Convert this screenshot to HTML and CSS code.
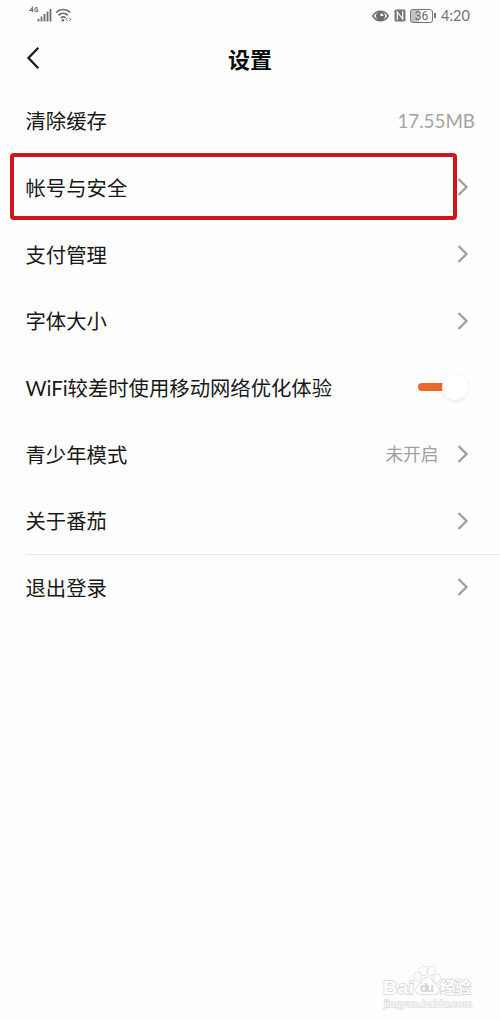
FILE: index.html
```html
<!DOCTYPE html>
<html lang="zh-CN">
<head>
<meta charset="utf-8">
<title>设置</title>
<link rel="stylesheet" href="styles.css">
</head>
<body>
<div class="screen">
  <div class="status">
    <svg class="signal" width="44" height="18" viewBox="0 0 44 18" fill="none" stroke="#6e6e6e">
      <path d="M3.400 7V2.500L1 5.500h3.400M8.600 3.400C7.800 2 5.800 2.600 5.800 4.600s2 2.800 2.900 1.600V4.800H7.300" stroke-width="1.100"/>
      <path d="M9.500 14v2.500M12.500 11.500v5M15.500 9v7.500M18.500 6.500v10M21.500 4v12.500" stroke-width="1.800"/>
      <path d="M27 7.500c4.200-4 10.200-4 14.400 0M29.500 10.300c2.800-2.600 6.600-2.600 9.400 0M31.800 12.900c1.500-1.300 3.300-1.300 4.800 0" stroke-width="1.700"/>
      <circle cx="33.900" cy="15.200" r="1.300" fill="#6e6e6e" stroke="none"/>
      <path d="m38.500 12.800-1.500 1.500 1.500 1.500M40.200 12.800l1.500 1.500-1.500 1.500" stroke-width="1"/>
    </svg>
    <div class="status-right">
      <svg width="17" height="14" viewBox="0 0 17 14">
        <path d="M.8 7C4.500.8 12.500.8 16.200 7 12.500 13.200 4.500 13.200.8 7Z" fill="#fff" stroke="#6e6e6e" stroke-width="1.500"/>
        <circle cx="8.500" cy="7" r="4.600" fill="#6e6e6e"/>
        <path d="M8.500 4.200v2.900h2.900a2.900 2.900 0 0 0-2.900-2.900Z" fill="#fff"/>
      </svg>
      <svg class="nfc" width="12" height="13" viewBox="0 0 12 13">
        <rect x=".5" y=".5" width="11" height="12" rx="1.500" fill="#747474"/>
        <path d="M3.300 11V3l5.400 7V2" fill="none" stroke="#fff" stroke-width="1.200"/>
      </svg>
      <div class="battery"><span>36</span></div>
      <i class="battery-tip"></i>
      <time>4:20</time>
    </div>
  </div>
  <header>
    <svg class="back" width="15" height="24" viewBox="0 0 15 24"><path d="M12.300 1.800 2.500 12l9.800 10.200" fill="none" stroke="#1a1a1a" stroke-width="2.300"/></svg>
    <h1>设置</h1>
  </header>
  <main>
    <div class="row"><span>清除缓存</span><span class="size">17.55MB</span></div>
    <div class="row marked"><span>帐号与安全</span><svg class="arrow" viewBox="0 0 12 18"><path d="m1.500 1 8 8-8 8"/></svg></div>
    <div class="row"><span>支付管理</span><svg class="arrow" viewBox="0 0 12 18"><path d="m1.500 1 8 8-8 8"/></svg></div>
    <div class="row"><span>字体大小</span><svg class="arrow" viewBox="0 0 12 18"><path d="m1.500 1 8 8-8 8"/></svg></div>
    <div class="row"><span>WiFi较差时使用移动网络优化体验</span><div class="switch"><i class="knob"></i></div></div>
    <div class="row"><span>青少年模式</span><span class="value">未开启</span><svg class="arrow" viewBox="0 0 12 18"><path d="m1.500 1 8 8-8 8"/></svg></div>
    <div class="row"><span>关于番茄</span><svg class="arrow" viewBox="0 0 12 18"><path d="m1.500 1 8 8-8 8"/></svg></div>
    <div class="row divided"><span>退出登录</span><svg class="arrow" viewBox="0 0 12 18"><path d="m1.500 1 8 8-8 8"/></svg></div>
  </main>
  <svg class="watermark" width="100" height="50" viewBox="0 0 100 50" fill="#fff" stroke="#d6d6d6" stroke-width="1.500">
    <text x="2" y="31.500" font-size="19" font-weight="700" textLength="31" lengthAdjust="spacingAndGlyphs">Bai</text>
    <ellipse cx="36.700" cy="14.500" rx="3.400" ry="4.300" transform="rotate(-18 36.700 14.500)"/>
    <ellipse cx="42.500" cy="8.700" rx="3.300" ry="4.500"/>
    <ellipse cx="50.500" cy="9" rx="3.300" ry="4.500" transform="rotate(10 50.500 9)"/>
    <ellipse cx="56" cy="16.500" rx="3.300" ry="4.300" transform="rotate(18 56 16.500)"/>
    <path d="M46.500 15.500c4 0 4.500 4 8.500 7 5 4.500 3 9.500-2 9.500H40c-5.500 0-6.500-5-2.500-8.500 4-3 5-8 9-8Z"/>
    <text class="du" x="39" y="30" font-size="12.500" font-weight="700" textLength="14">du</text>
    <text x="59" y="30.500" font-size="15.500" font-weight="700" textLength="31">经验</text>
    <text class="url" x="3" y="44.500" font-size="9" textLength="88" lengthAdjust="spacingAndGlyphs">jingyan.baidu.com</text>
  </svg>
</div>
</body>
</html>
```
FILE: styles.css
```css
*, *::before, *::after { box-sizing: border-box; }
body {
  margin: 0;
  background: #fefefe;
  color: #181818;
  font-family: Lato, "Noto Sans CJK SC", sans-serif;
}
.screen {
  position: relative;
  width: 500px;
  height: 1020px;
  overflow: hidden;
}
.status {
  display: flex;
  justify-content: space-between;
  align-items: center;
  height: 31px;
  padding: 0 30px 0 29px;
}
.signal { margin-top: -3px; }
.status-right { display: flex; align-items: center; }
.nfc { margin-left: 5px; }
.battery {
  display: flex;
  align-items: center;
  justify-content: center;
  width: 23px;
  height: 14px;
  margin-left: 4px;
  border: 1px solid #777;
  border-radius: 3px;
  background: linear-gradient(90deg, #c4c4c4 36%, #fefefe 36%);
  color: #666;
  font: 12px/12px Roboto, sans-serif;
}
.battery-tip {
  width: 2px;
  height: 5px;
  margin-left: 1px;
  background: #777;
}
time {
  width: 29px;
  margin-left: 5px;
  color: #727272;
  font-size: 14.5px;
  line-height: 18px;
  white-space: nowrap;
}
header {
  display: grid;
  grid-template-columns: 75px 1fr 75px;
  align-items: center;
  height: 57px;
}
.back { margin: -3px 0 0 26px; }
h1 {
  margin: 1px 0 0;
  color: #0c0c0c;
  font-size: 22px;
  line-height: 32px;
  font-weight: 700;
  text-align: center;
}
.row {
  position: relative;
  display: flex;
  align-items: center;
  height: 66.67px;
  padding: 0 31px 0 25.5px;
  font-size: 20.35px;
  line-height: 30px;
}
.row > span:first-child { flex: 1; }
.row .size {
  margin-right: -6px;
  color: #a3a3a3;
  font-size: 18.8px;
}
.value {
  margin: 1px 18.5px 0 0;
  color: #a0a0a0;
  font-size: 17.7px;
}
.arrow {
  width: 12px;
  height: 18px;
  margin-top: -1px;
  fill: none;
  stroke: #a0a0a0;
  stroke-width: 2.4px;
}
.marked::after {
  content: "";
  position: absolute;
  left: 10px;
  top: -1.5px;
  width: 446.5px;
  height: 67px;
  border: 4px solid #d0161b;
  border-radius: 4px;
}
.divided::before {
  content: "";
  position: absolute;
  left: 26px;
  right: 0;
  top: -1px;
  height: 1px;
  background: #e6e6e6;
}
.switch {
  display: flex;
  align-items: center;
  justify-content: flex-end;
  width: 50px;
  height: 8px;
  margin: -1px 1px 0 0;
  border-radius: 4px;
  background: linear-gradient(90deg, #ea682c 60%, transparent 60%);
}
.knob {
  width: 26px;
  height: 26px;
  flex: none;
  border-radius: 50%;
  background: #fff;
  box-shadow: 0 1px 4px #00000018;
}
.watermark {
  position: absolute;
  left: 381px;
  top: 962px;
  font-family: "Liberation Sans", "Noto Sans CJK SC", sans-serif;
  paint-order: stroke;
}
.du { fill: #d2d2d2; stroke: none; }
.url { fill: #fff; stroke: #dedede; }
```
